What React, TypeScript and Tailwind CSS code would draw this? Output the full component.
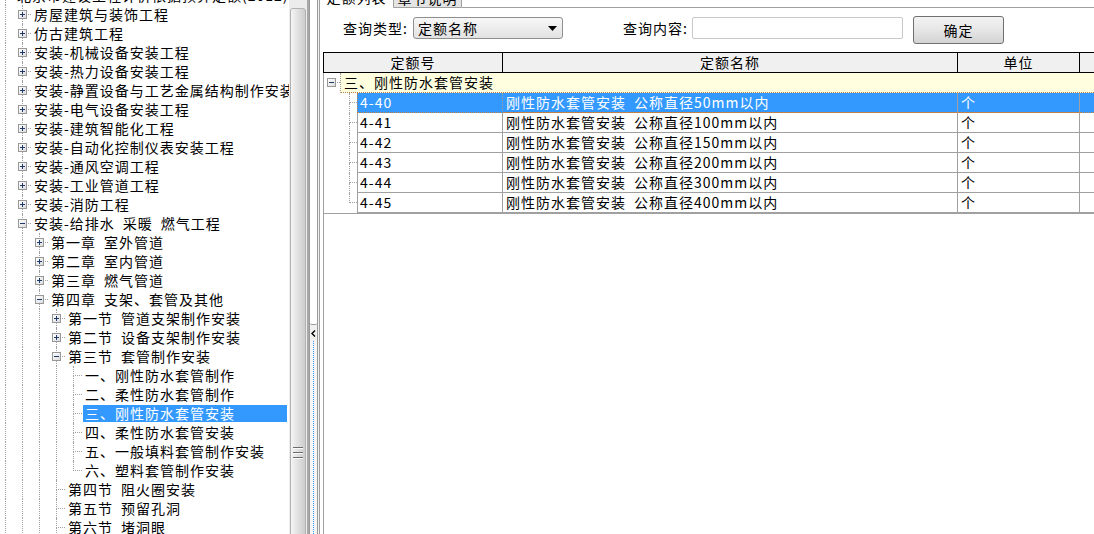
import React from 'react';

type TreeNode = {
  label: string;
  open?: boolean;
  selected?: boolean;
  more?: boolean;
  children?: TreeNode[];
};

type Row = {
  label: string;
  level: number;
  guides: boolean[];
  last: boolean;
  kind: 'plus' | 'minus' | 'leaf';
  selected?: boolean;
};

const S = '\u2002';

const closed = (label: string): TreeNode => ({ label, children: [] });
const leaf = (label: string, selected = false): TreeNode => ({ label, selected });

const tree: TreeNode[] = [
  {
    label: '北京市建设工程计价依据预算定额(2012)',
    open: true,
    more: true,
    children: [
      closed('房屋建筑与装饰工程'),
      closed('仿古建筑工程'),
      closed('安装-机械设备安装工程'),
      closed('安装-热力设备安装工程'),
      closed('安装-静置设备与工艺金属结构制作安装工程'),
      closed('安装-电气设备安装工程'),
      closed('安装-建筑智能化工程'),
      closed('安装-自动化控制仪表安装工程'),
      closed('安装-通风空调工程'),
      closed('安装-工业管道工程'),
      closed('安装-消防工程'),
      {
        label: `安装-给排水${S}采暖${S}燃气工程`,
        open: true,
        more: true,
        children: [
          closed(`第一章${S}室外管道`),
          closed(`第二章${S}室内管道`),
          closed(`第三章${S}燃气管道`),
          {
            label: `第四章${S}支架、套管及其他`,
            open: true,
            more: true,
            children: [
              closed(`第一节${S}管道支架制作安装`),
              closed(`第二节${S}设备支架制作安装`),
              {
                label: `第三节${S}套管制作安装`,
                open: true,
                children: [
                  leaf('一、刚性防水套管制作'),
                  leaf('二、柔性防水套管制作'),
                  leaf('三、刚性防水套管安装', true),
                  leaf('四、柔性防水套管安装'),
                  leaf('五、一般填料套管制作安装'),
                  leaf('六、塑料套管制作安装'),
                ],
              },
              leaf(`第四节${S}阻火圈安装`),
              leaf(`第五节${S}预留孔洞`),
              { ...leaf(`第六节${S}堵洞眼`), more: true },
            ],
          },
        ],
      },
    ],
  },
];

function flatten(nodes: TreeNode[], level: number, guides: boolean[], out: Row[]) {
  nodes.forEach((n, i) => {
    const last = i === nodes.length - 1 && !n.more;
    const kind = !n.children ? 'leaf' : n.open ? 'minus' : 'plus';
    out.push({ label: n.label, level, guides, last, kind, selected: n.selected });
    if (n.open && n.children) flatten(n.children, level + 1, [...guides, !last], out);
  });
  return out;
}

const rows = flatten(tree, 0, [], []);

const items = [
  ['4-40', `刚性防水套管安装${S}公称直径50mm以内`, '个'],
  ['4-41', `刚性防水套管安装${S}公称直径100mm以内`, '个'],
  ['4-42', `刚性防水套管安装${S}公称直径150mm以内`, '个'],
  ['4-43', `刚性防水套管安装${S}公称直径200mm以内`, '个'],
  ['4-44', `刚性防水套管安装${S}公称直径300mm以内`, '个'],
  ['4-45', `刚性防水套管安装${S}公称直径400mm以内`, '个'],
];

function ToggleBox({ open, className }: { open: boolean; className: string }) {
  return (
    <div
      className={`absolute flex h-[9px] w-[9px] items-center justify-center border border-[#989898] bg-linear-to-br from-white to-[#dcdcdc] ${className}`}
    >
      <svg width="7" height="7" viewBox="0 0 7 7">
        <rect x="1" y="3" width="5" height="1" fill="#1e3a6b" />
        {!open && <rect x="3" y="1" width="1" height="5" fill="#1e3a6b" />}
      </svg>
    </div>
  );
}

function TreeRow({ row }: { row: Row }) {
  const cols = [];
  for (let j = 0; j < row.level; j++) {
    const first = j === 0;
    cols.push(
      <div key={j} className={`relative h-full shrink-0 ${first ? 'w-[14px]' : 'w-[17px]'}`}>
        {row.guides[j] && (
          <div
            className={`absolute inset-y-0 border-l border-dotted border-[#a0a0a0] ${first ? 'left-[5px]' : 'left-[8px]'}`}
          />
        )}
      </div>
    );
  }
  const first = row.level === 0;
  const pos = first ? 'left-[5px]' : 'left-[8px]';

  return (
    <div className="flex h-[19px] items-center whitespace-nowrap">
      {cols}
      <div className={`relative h-full shrink-0 ${first ? 'w-[14px]' : 'w-[17px]'}`}>
        <div className={`absolute top-0 h-[10px] border-l border-dotted border-[#a0a0a0] ${pos}`} />
        {!row.last && (
          <div className={`absolute top-[10px] bottom-0 border-l border-dotted border-[#a0a0a0] ${pos}`} />
        )}
        <div className={`absolute top-[9px] right-0 border-t border-dotted border-[#a0a0a0] ${pos}`} />
        {row.kind !== 'leaf' && (
          <ToggleBox open={row.kind === 'minus'} className={`top-[5px] ${first ? 'left-[1px]' : 'left-[4px]'}`} />
        )}
      </div>
      <div
        className={
          row.selected
            ? 'ml-[1px] mr-[2px] h-[17px] flex-1 bg-[#3399ff] pl-[2px] leading-[17px] text-white'
            : 'ml-[3px] h-[17px] leading-[17px]'
        }
      >
        {row.label}
      </div>
    </div>
  );
}

function Scrollbar() {
  return (
    <div className="flex w-[18px] shrink-0 flex-col bg-[#ececec] px-[1px] pt-[8px]">
      <div className="-mb-[10px] flex flex-1 flex-col items-center rounded-t-[3px] border border-[#b2b2b2] bg-linear-to-r from-[#f5f5f5] via-[#e0e0e0] to-[#cdcdcd]">
        <div className="mt-[438px] flex flex-col gap-[3px]">
          <div className="h-[2px] w-[10px] border-t border-[#6c6c6c] bg-[#fafafa]" />
          <div className="h-[2px] w-[10px] border-t border-[#6c6c6c] bg-[#fafafa]" />
          <div className="h-[2px] w-[10px] border-t border-[#6c6c6c] bg-[#fafafa]" />
        </div>
      </div>
    </div>
  );
}

function Splitter() {
  return (
    <div className="flex w-[12px] shrink-0 border-l-2 border-[#a9a9a9] bg-[#f0f0f0]">
      <div className="flex w-[9px] flex-col border-x border-[#9a9a9a]">
        <div className="h-[325px] rounded-b-[2px] border-b border-[#9a9a9a] bg-white" />
        <div className="flex h-[16px] items-center justify-center">
          <svg width="5" height="7" viewBox="0 0 5 7">
            <path d="M4 0.5 L1 3.5 L4 6.5" stroke="#000" strokeWidth="1.4" fill="none" />
          </svg>
        </div>
        <div className="relative flex-1 bg-[#f6f6f6]">
          <div className="absolute inset-y-0 left-[3px] border-l border-dotted border-[#3399ff]" />
        </div>
      </div>
    </div>
  );
}

function QueryBar() {
  return (
    <div className="mt-[8px] flex h-[28px] items-start pl-[23px]">
      <div className="mt-[1px] h-[22px] w-[70px] leading-[22px]">查询类型:</div>
      <div className="mt-[1px] flex h-[22px] w-[150px] items-center justify-between rounded-[3px] border border-[#8f8f8f] bg-linear-to-b from-[#f7f7f7] to-[#e2e2e2] pl-[4px] pr-[5px]">
        <span className="leading-[20px]">定额名称</span>
        <svg width="9" height="5" viewBox="0 0 9 5">
          <path d="M0 0 H9 L4.5 5 Z" fill="#000" />
        </svg>
      </div>
      <div className="ml-[60px] mt-[1px] h-[22px] w-[69px] leading-[22px]">查询内容:</div>
      <div className="mt-[1px] h-[22px] w-[211px] rounded-[2px] border border-[#c8c8c8] bg-white" />
      <button className="ml-[10px] h-[28px] w-[91px] rounded-[3px] border border-[#707070] bg-linear-to-b from-[#f3f3f3] via-[#e6e6e6] to-[#d3d3d3] leading-[26px]">
        确定
      </button>
    </div>
  );
}

function DataTable() {
  return (
    <div className="ml-[3px] mt-[8px] flex flex-1 flex-col">
      <div className="flex h-[21px] border-y border-l border-black bg-[#f0f0f0] leading-[19px]">
        <div className="w-[179px] shrink-0 border-r border-black text-center">定额号</div>
        <div className="w-[455px] shrink-0 border-r border-black text-center">定额名称</div>
        <div className="w-[122px] shrink-0 border-r border-black text-center">单位</div>
        <div className="flex-1" />
      </div>
      <div className="flex-1 border-l border-[#a0a0a0]">
        <div className="border-b border-[#a0a0a0]">
          <div className="flex h-[20px]">
            <div className="relative w-[16px] shrink-0">
              <div className="absolute top-[9px] left-[8px] right-0 border-t border-dotted border-[#a0a0a0]" />
              <ToggleBox open className="top-[5px] left-[3px]" />
            </div>
            <div className="flex-1 border-b border-l border-dotted border-b-[#c0804a] border-l-[#a0a0a0] bg-[#ffffe0] pl-[3px] leading-[19px]">
              三、刚性防水套管安装
            </div>
          </div>
          {items.map((it, i) => {
            const sel = i === 0;
            const last = i === items.length - 1;
            const cell = sel
              ? 'border-b border-dotted border-b-[#c0804a] border-r-[#a0a0a0] bg-[#3399ff] text-white'
              : 'border-b border-[#a0a0a0]';
            return (
              <div key={it[0]} className="flex h-[20px] leading-[19px]">
                <div className="w-[16px] shrink-0" />
                <div className="relative w-[17px] shrink-0">
                  <div className="absolute top-0 h-[10px] left-[9px] border-l border-dotted border-[#a0a0a0]" />
                  {!last && (
                    <div className="absolute top-[10px] bottom-0 left-[9px] border-l border-dotted border-[#a0a0a0]" />
                  )}
                  <div className="absolute top-[9px] left-[9px] right-0 border-t border-dotted border-[#a0a0a0]" />
                </div>
                <div
                  className={`w-[146px] shrink-0 border-x pl-[2px] ${cell} ${sel ? 'border-l-[#c0804a] border-dotted' : ''}`}
                >
                  {it[0]}
                </div>
                <div className={`w-[455px] shrink-0 border-r border-solid pl-[3px] ${cell}`}>{it[1]}</div>
                <div className={`w-[122px] shrink-0 border-r border-solid pl-[3px] ${cell}`}>{it[2]}</div>
                <div className={`flex-1 ${cell}`} />
              </div>
            );
          })}
        </div>
      </div>
    </div>
  );
}

export default function App() {
  return (
    <div className="flex h-[534px] w-[1094px] overflow-hidden bg-white font-['Noto_Sans_CJK_SC',sans-serif] text-[14px] tracking-[1px] text-black">
      <div className="w-[289px] shrink-0 overflow-hidden bg-white">
        <div className="-mt-[14px]">
          {rows.map((r, i) => (
            <TreeRow key={i} row={r} />
          ))}
        </div>
      </div>
      <Scrollbar />
      <Splitter />
      <div className="flex min-w-0 flex-1 flex-col border-l border-[#a0a0a0] bg-white">
        <div className="-mt-[12px] flex h-[20px] shrink-0">
          <div className="w-[73px] text-center leading-[19px]">定额列表</div>
          <div className="w-[69px] rounded-t-[3px] border border-[#a0a0a0] bg-[#e4e4e4] text-center leading-[18px]">
            章节说明
          </div>
          <div className="flex-1 border-b border-[#a0a0a0]" />
        </div>
        <QueryBar />
        <DataTable />
      </div>
    </div>
  );
}
